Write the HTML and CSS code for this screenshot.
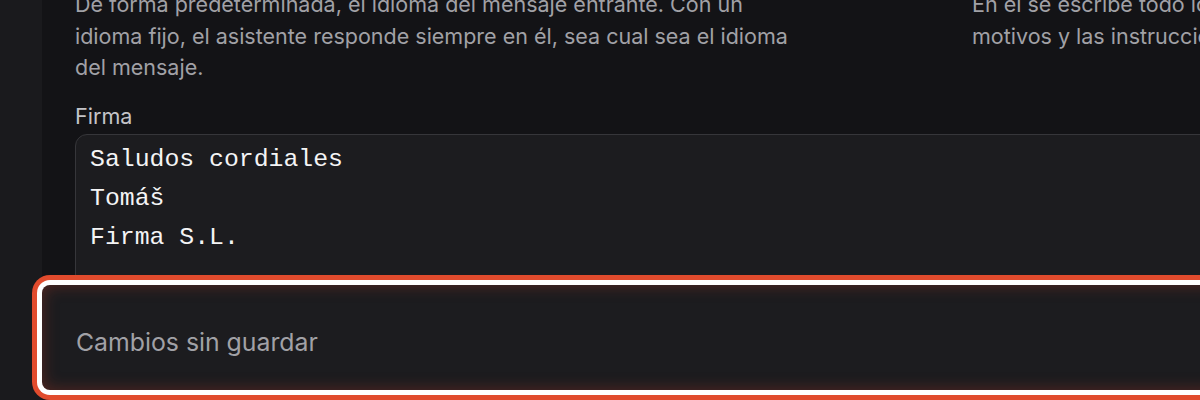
FILE: index.html
```html
<!DOCTYPE html>
<html lang="es">
<head>
<meta charset="utf-8">
<title>Ajustes del asistente</title>
<link rel="stylesheet" href="styles.css">
</head>
<body>
<div class="app">
  <aside class="sidebar"></aside>
  <main class="main">
    <section class="settings">
      <p class="hint">De forma predeterminada, el idioma del mensaje entrante. Con un idioma fijo, el asistente responde siempre en él, sea cual sea el idioma del mensaje.</p>
      <p class="hint hint-side">En él se escribe todo lo que el asistente debe saber: el tono, los<br>motivos y las instrucciones.</p>
      <div class="field">
        <label class="field-label" for="firma">Firma</label>
        <div class="signature" id="firma">Saludos cordiales
Tomáš
Firma S.L.</div>
      </div>
    </section>
    <div class="savebar">
      <span class="savebar-text">Cambios sin guardar</span>
    </div>
  </main>
</div>
</body>
</html>
```

FILE: styles.css
```css
html, body {
  margin: 0;
  height: 100%;
  background: #131316;
  overflow: hidden;
}

body {
  font-family: Inter, "Noto Sans", sans-serif;
}

.app {
  display: grid;
  grid-template-columns: 42px 1fr;
  height: 100%;
}

.sidebar {
  background: #1a1a1d;
}

.main {
  position: relative;
  background: #131316;
}

.settings {
  display: grid;
  grid-template-columns: 740px 1fr;
  column-gap: 157px;
  padding: 0 0 0 33px;
  margin-top: -11px;
}

.hint {
  margin: 0;
  font-size: 21.5px;
  line-height: 31.5px;
  color: #a1a1a6;
}

.hint-side {
  white-space: nowrap;
}

.field {
  grid-column: 1 / -1;
  display: flex;
  flex-direction: column;
  gap: 6px;
  margin-top: 20px;
  margin-right: -40px;
}

.field-label {
  font-size: 21.6px;
  line-height: 24px;
  color: #c4c4c8;
}

.signature {
  white-space: pre-line;
  font-family: "Liberation Mono", "DejaVu Sans Mono", monospace;
  font-size: 24.8px;
  line-height: 39px;
  color: #f4f4f5;
  background: #1c1c1f;
  border: 1px solid #36363a;
  border-radius: 12px;
  padding: 5px 14px 80px;
}

.savebar {
  position: absolute;
  left: 0;
  right: -30px;
  top: 285px;
  height: 105px;
  display: flex;
  align-items: center;
  padding: 9px 0 0 34px;
  box-sizing: border-box;
  background: #1c1c1f;
  border-radius: 8px;
  box-shadow:
    0 0 0 5px #ffffff,
    0 0 0 10px #e14b2d,
    inset 0 0 16px rgba(200, 60, 36, 0.35);
}

.savebar-text {
  font-size: 24.8px;
  color: #a1a1a6;
}
```
